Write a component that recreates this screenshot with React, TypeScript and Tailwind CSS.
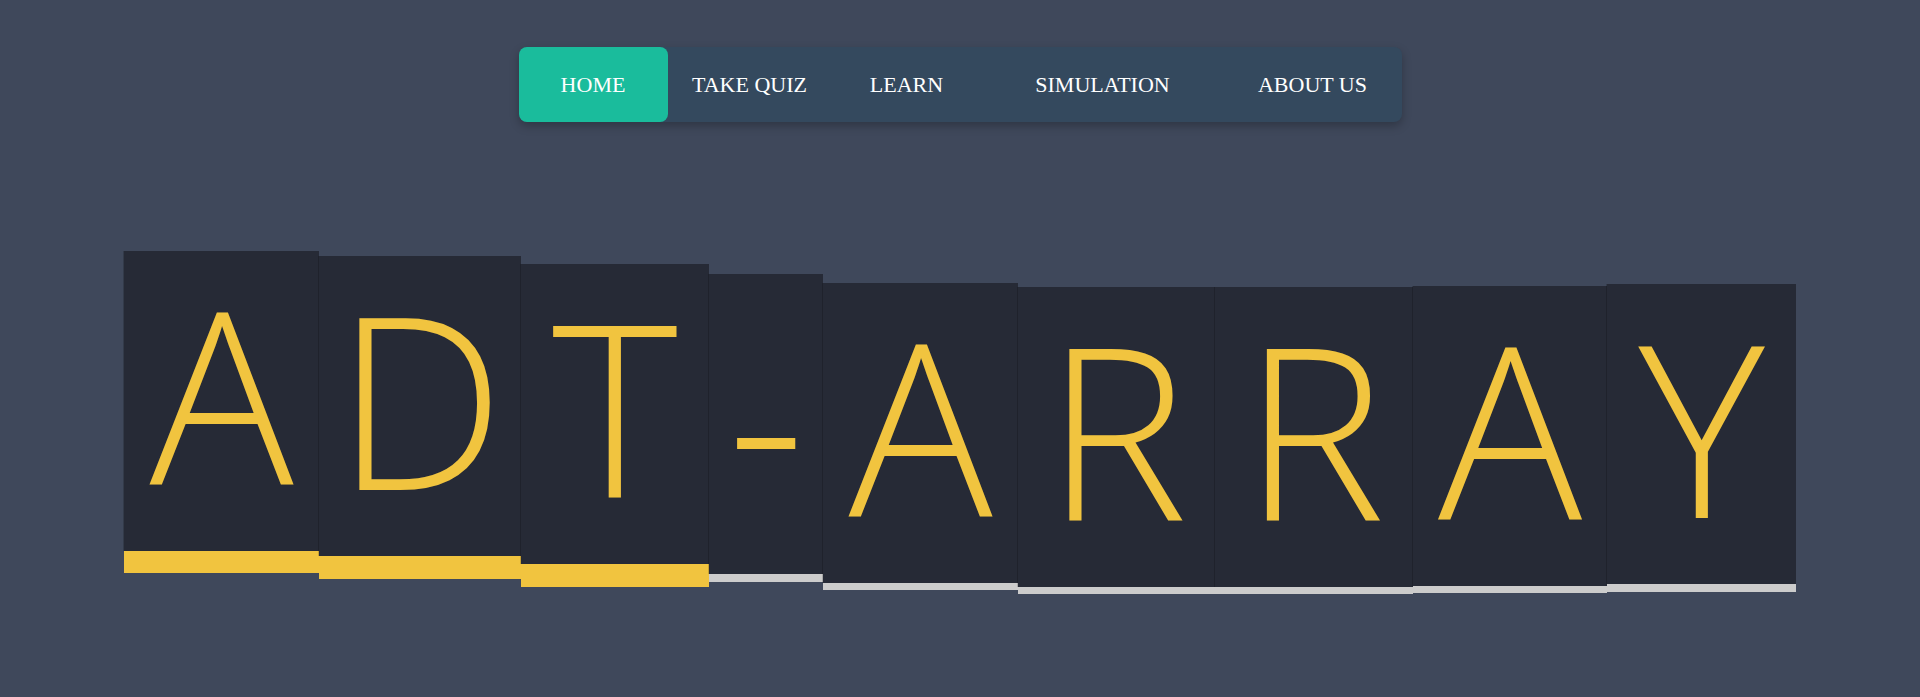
import React from 'react';

const links = [
  { label: 'HOME', w: 'w-[149px]', active: true },
  { label: 'TAKE QUIZ', w: 'w-[164px]' },
  { label: 'LEARN', w: 'w-[150px]' },
  { label: 'SIMULATION', w: 'w-[242px]' },
  { label: 'ABOUT US', w: 'w-[178px]' },
];

// the title tiles sit on a wave, each one dropped a little from the first
const tiles = [
  { ch: 'A', w: 'w-[195px]', mt: 'mt-0', bar: 'h-[22px] bg-[#f1c43f]' },
  { ch: 'D', w: 'w-[202px]', mt: 'mt-[5px]', bar: 'h-[23px] bg-[#f1c43f]' },
  { ch: 'T', w: 'w-[188px]', mt: 'mt-[13px]', bar: 'h-[23px] bg-[#f1c43f]' },
  { ch: '-', w: 'w-[114px]', mt: 'mt-[23px]', bar: 'h-[8px] bg-[#cccccc]' },
  { ch: 'A', w: 'w-[195px]', mt: 'mt-[32px]', bar: 'h-[7px] bg-[#cccccc]' },
  { ch: 'R', w: 'w-[197px]', mt: 'mt-[36px]', bar: 'h-[7px] bg-[#cccccc]' },
  { ch: 'R', w: 'w-[198px]', mt: 'mt-[36px]', bar: 'h-[7px] bg-[#cccccc]' },
  { ch: 'A', w: 'w-[194px]', mt: 'mt-[35px]', bar: 'h-[7px] bg-[#cccccc]' },
  { ch: 'Y', w: 'w-[189px]', mt: 'mt-[33px]', bar: 'h-[8px] bg-[#cccccc]' },
];

export default function App() {
  return (
    <div className="w-full h-[697px] bg-[#3f485b] overflow-hidden">
      <div className="flex justify-center pt-[47px]">
        <nav className="flex h-[75px] rounded-lg bg-[#34495e] shadow-[0_4px_10px_rgba(0,0,0,0.25)]">
          {links.map((link) => (
            <a
              key={link.label}
              className={`${link.w} flex items-center justify-center text-white text-[22px] rounded-lg ${link.active ? 'bg-[#1abc9c]' : ''}`}
              style={{ fontFamily: '"Liberation Serif", serif' }}
            >
              {link.label}
            </a>
          ))}
        </nav>
      </div>

      <div className="flex justify-center items-start mt-[129px]">
        {tiles.map((t, i) => (
          <div key={i} className={`${t.w} ${t.mt} flex flex-col`}>
            <div
              className="h-[300px] bg-[#262a36] text-[#f1c43f] text-[240px] font-light leading-[282px] text-center shadow-[-1px_0_0_rgba(0,0,0,0.18)]"
              style={{ fontFamily: '"Open Sans", sans-serif' }}
            >
              {t.ch}
            </div>
            <div className={t.bar} />
          </div>
        ))}
      </div>
    </div>
  );
}
